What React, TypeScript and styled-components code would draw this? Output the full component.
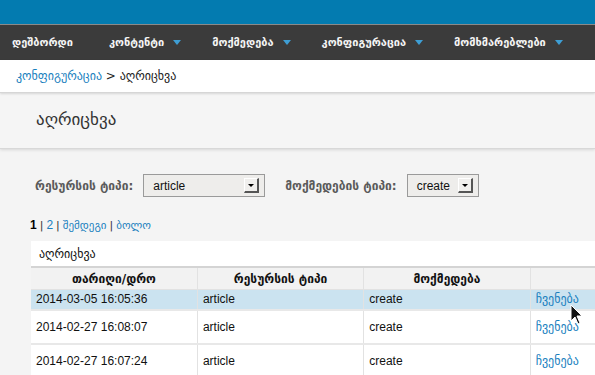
import React from "react";
import styled, { createGlobalStyle } from "styled-components";

const GlobalStyle = createGlobalStyle`
  html, body { margin: 0; padding: 0; }
  body {
    background: #f4f4f4;
    font-family: "Liberation Sans", "DejaVu Sans", sans-serif;
    overflow: hidden;
    width: 595px;
    height: 375px;
  }
`;

const TopBar = styled.div`
  height: 24px;
  background: #037bb0;
  border-bottom: 1px solid #8a8a8a;
`;

const Nav = styled.nav`
  height: 35px;
  background: #3b3b3b;
  display: flex;
  align-items: center;
  padding-left: 12px;
`;

const NavItem = styled.div<{ $arrow?: boolean }>`
  display: flex;
  align-items: center;
  color: #f4f4f4;
  font-family: "DejaVu Sans", sans-serif;
  font-weight: bold;
  font-size: 11px;
  margin-right: ${(p) => (p.$arrow ? "31px" : "36px")};
  white-space: nowrap;
`;

const Caret = styled.span`
  display: inline-block;
  margin-left: 9px;
  width: 0;
  height: 0;
  border-left: 4px solid transparent;
  border-right: 4px solid transparent;
  border-top: 5px solid #3e9ed4;
`;

const Breadcrumb = styled.div`
  height: 32px;
  background: #fff;
  display: flex;
  align-items: center;
  padding-left: 16px;
  font-family: "DejaVu Sans", sans-serif;
  font-size: 12px;
  color: #222;
  border-bottom: 1px solid #d6d6d6;
  box-shadow: 0 1px 2px rgba(0, 0, 0, 0.12);
  position: relative;
  z-index: 1;
`;

const Link = styled.a`
  color: #1a7fbe;
  text-decoration: none;
`;

const PageHeader = styled.div`
  height: 56px;
  background: #f5f5f5;
  display: flex;
  align-items: center;
  padding-left: 36px;
  padding-bottom: 4px;
  box-sizing: border-box;
  font-family: "DejaVu Sans", sans-serif;
  font-size: 17px;
  color: #333;
  border-bottom: 1px solid #d8d8d8;
  box-shadow: 0 1px 3px rgba(0, 0, 0, 0.12);
`;

const Filters = styled.div`
  display: flex;
  align-items: center;
  padding-left: 35px;
  margin-top: 25px;
  height: 23px;
`;

const Label = styled.span<{ $gap: number }>`
  font-family: "DejaVu Sans", sans-serif;
  font-weight: bold;
  font-size: 12px;
  color: #5a5a5a;
  margin-right: 10px;
  margin-left: ${(p) => p.$gap}px;
`;

const Select = styled.div<{ $w: number }>`
  width: ${(p) => p.$w}px;
  height: 23px;
  box-sizing: border-box;
  border: 1px solid #9a9a9a;
  background: #eeedeb;
  display: flex;
  align-items: center;
  justify-content: space-between;
  padding: 0 5px 0 9px;
  font-family: "Liberation Sans", sans-serif;
  font-size: 12px;
  color: #111;
`;

const SelectButton = styled.span`
  width: 15px;
  height: 15px;
  box-sizing: border-box;
  background: #f0efed;
  border-top: 1px solid #fff;
  border-left: 1px solid #fff;
  border-right: 2px solid #555;
  border-bottom: 2px solid #555;
  display: flex;
  align-items: center;
  justify-content: center;
  &::after {
    content: "";
    border-left: 3px solid transparent;
    border-right: 3px solid transparent;
    border-top: 3px solid #000;
  }
`;

const Pager = styled.div`
  margin-top: 21px;
  padding-left: 30px;
  font-family: "DejaVu Sans", sans-serif;
  font-size: 11px;
  color: #333;
  height: 14px;
  display: flex;
  align-items: center;
  gap: 3px;
`;

const Current = styled.b`
  color: #000;
  font-family: "Liberation Sans", sans-serif;
  font-size: 12px;
`;

const PagerNum = styled(Link)`
  font-family: "Liberation Sans", sans-serif;
  font-size: 12px;
`;

const Panel = styled.div`
  margin-top: 9px;
  margin-left: 31px;
  width: 700px;
  background: #fff;
`;

const Caption = styled.div`
  height: 25px;
  display: flex;
  align-items: center;
  padding-left: 8px;
  font-family: "DejaVu Sans", sans-serif;
  font-size: 12px;
  color: #111;
`;

const Table = styled.table`
  border-collapse: collapse;
  table-layout: fixed;
  width: 666px;
`;

const Th = styled.th`
  height: 21px;
  padding: 0;
  background: #f2f2f2;
  border-top: 2px solid #d4d4d4;
  border-right: 1px solid #e2e2e2;
  border-bottom: 1px solid #e2e2e2;
  font-family: "DejaVu Sans", sans-serif;
  font-size: 12px;
  font-weight: bold;
  color: #111;
  text-align: center;
`;

const Tr = styled.tr<{ $active?: boolean; $h: number }>`
  height: ${(p) => p.$h}px;
  background: ${(p) => (p.$active ? "#cbe3f0" : "#fff")};
`;

const Td = styled.td`
  padding: 0 0 0 5px;
  border-right: 1px solid #e2e2e2;
  border-bottom: 2px solid #e8e8e8;
  font-family: "Liberation Sans", sans-serif;
  font-size: 12px;
  color: #111;
`;

const ShowLink = styled(Link)`
  font-family: "DejaVu Sans", sans-serif;
  font-size: 12px;
`;

const Cursor = styled.svg`
  position: absolute;
  left: 570px;
  top: 304px;
`;

const rows = [
  { date: "2014-03-05 16:05:36", h: 20, active: true },
  { date: "2014-02-27 16:08:07", h: 34 },
  { date: "2014-02-27 16:07:24", h: 34 },
];

export default function App() {
  return (
    <>
      <GlobalStyle />
      <TopBar />
      <Nav>
        <NavItem>დეშბორდი</NavItem>
        <NavItem $arrow>
          კონტენტი
          <Caret />
        </NavItem>
        <NavItem $arrow>
          მოქმედება
          <Caret />
        </NavItem>
        <NavItem $arrow>
          კონფიგურაცია
          <Caret />
        </NavItem>
        <NavItem $arrow>
          მომხმარებლები
          <Caret />
        </NavItem>
      </Nav>
      <Breadcrumb>
        <Link href="#">კონფიგურაცია</Link>&nbsp;&gt; აღრიცხვა
      </Breadcrumb>
      <PageHeader>აღრიცხვა</PageHeader>
      <Filters>
        <Label $gap={0}>რესურსის ტიპი:</Label>
        <Select $w={122}>
          article
          <SelectButton />
        </Select>
        <Label $gap={20}>მოქმედების ტიპი:</Label>
        <Select $w={72}>
          create
          <SelectButton />
        </Select>
      </Filters>
      <Pager>
        <Current>1</Current> | <PagerNum href="#">2</PagerNum> |{" "}
        <Link href="#">შემდეგი</Link> | <Link href="#">ბოლო</Link>
      </Pager>
      <Panel>
        <Caption>აღრიცხვა</Caption>
        <Table>
          <thead>
            <tr>
              <Th>თარიღი/დრო</Th>
              <Th>რესურსის ტიპი</Th>
              <Th>მოქმედება</Th>
              <Th></Th>
            </tr>
          </thead>
          <tbody>
            {rows.map((r) => (
              <Tr key={r.date} $h={r.h} $active={r.active}>
                <Td>{r.date}</Td>
                <Td>article</Td>
                <Td>create</Td>
                <Td>
                  <ShowLink href="#">ჩვენება</ShowLink>
                </Td>
              </Tr>
            ))}
          </tbody>
        </Table>
      </Panel>
      <Cursor width="14" height="22" viewBox="0 0 14 22">
        <path d="M1 1 L1 17 L5 13 L8 20 L10 19 L7 12 L12 12 Z" fill="#111" stroke="#fff" strokeWidth="1" />
      </Cursor>
    </>
  );
}
